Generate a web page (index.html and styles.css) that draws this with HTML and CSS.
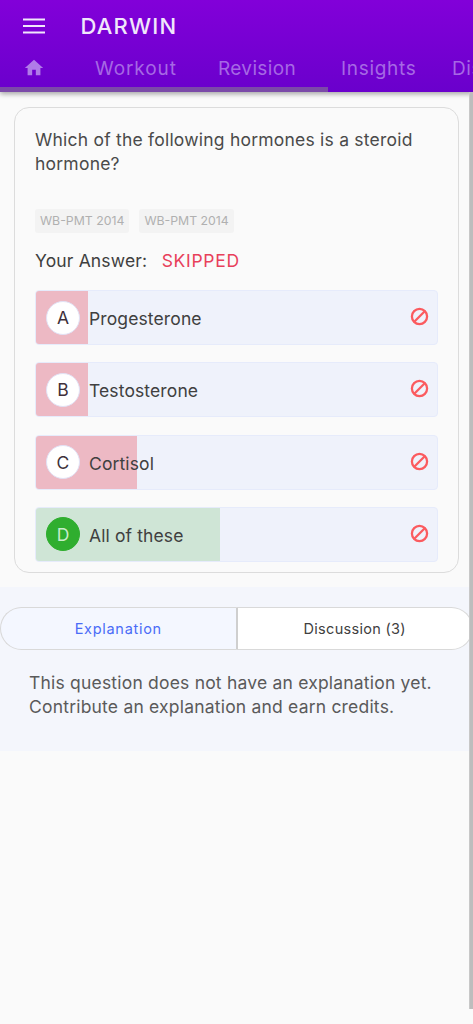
FILE: index.html
```html
<!DOCTYPE html>
<html lang="en">
<head>
<meta charset="utf-8">
<title>Darwin</title>
<link rel="stylesheet" href="styles.css">
</head>
<body>
<header class="appbar">
  <div class="toprow">
    <svg class="menu" viewBox="0 0 22 16" width="22" height="16"><path d="M0 1.5h22M0 8h22M0 14.5h22" stroke="#f1e6fb" stroke-width="2.2"/></svg>
    <span class="brand">DARWIN</span>
  </div>
  <nav class="tabs">
    <svg class="home" viewBox="0 0 24 24" width="22" height="22"><path d="M10 20v-6h4v6h5v-8h3L12 3 2 12h3v8z" fill="#b07be8"/></svg>
    <span class="tab t1">Workout</span>
    <span class="tab t2">Revision</span>
    <span class="tab t3">Insights</span>
    <span class="tab t4">Discussion</span>
  </nav>
  <div class="indicator"></div>
</header>
<div class="scrollbar"></div>
<main>
  <section class="card">
    <p class="question">Which of the following hormones is a steroid hormone?</p>
    <div class="chips"><span class="chip">WB-PMT 2014</span><span class="chip">WB-PMT 2014</span></div>
    <div class="answer"><span>Your Answer:</span><span class="skipped">SKIPPED</span></div>
    <div class="options">
      <div class="option"><div class="fill red" style="width:52px"></div><span class="letter">A</span><span class="label">Progesterone</span><svg class="ban" viewBox="0 0 20 20" width="19" height="19"><circle cx="10" cy="10" r="8" fill="none" stroke="#fb5b5f" stroke-width="2.4"/><path d="M4.5 15.5l11-11" stroke="#fb5b5f" stroke-width="2.4"/></svg></div>
      <div class="option"><div class="fill red" style="width:52px"></div><span class="letter">B</span><span class="label">Testosterone</span><svg class="ban" viewBox="0 0 20 20" width="19" height="19"><circle cx="10" cy="10" r="8" fill="none" stroke="#fb5b5f" stroke-width="2.4"/><path d="M4.5 15.5l11-11" stroke="#fb5b5f" stroke-width="2.4"/></svg></div>
      <div class="option"><div class="fill red" style="width:101px"></div><span class="letter">C</span><span class="label">Cortisol</span><svg class="ban" viewBox="0 0 20 20" width="19" height="19"><circle cx="10" cy="10" r="8" fill="none" stroke="#fb5b5f" stroke-width="2.4"/><path d="M4.5 15.5l11-11" stroke="#fb5b5f" stroke-width="2.4"/></svg></div>
      <div class="option"><div class="fill green" style="width:184px"></div><span class="letter correct">D</span><span class="label">All of these</span><svg class="ban" viewBox="0 0 20 20" width="19" height="19"><circle cx="10" cy="10" r="8" fill="none" stroke="#fb5b5f" stroke-width="2.4"/><path d="M4.5 15.5l11-11" stroke="#fb5b5f" stroke-width="2.4"/></svg></div>
    </div>
  </section>
  <section class="explain">
    <div class="segment">
      <div class="seg active">Explanation</div>
      <div class="seg other">Discussion (3)</div>
    </div>
    <p class="note">This question does not have an explanation yet. Contribute an explanation and earn credits.</p>
  </section>
</main>
</body>
</html>
```
FILE: styles.css
```css
* { box-sizing: border-box; }
html, body { margin: 0; height: 100%; overflow: hidden; }
body {
  background: #fafafa;
  font-family: Inter, "Liberation Sans", sans-serif;
  color: #404040;
  position: relative;
  height: 1024px;
}
.appbar {
  height: 92px;
  position: relative;
  background: linear-gradient(#8200d9, #6a00cc);
  box-shadow: 0 2px 5px rgba(0,0,0,.35);
  overflow: hidden;
}
.toprow { display: flex; align-items: center; height: 51px; padding-left: 23px; }
.menu { flex: none; }
.brand { margin-left: 35.5px; margin-top: 1px; color: #f1e6fb; font-size: 22px; font-weight: 500; letter-spacing: 1.2px; }
.tabs { display: flex; align-items: center; height: 36px; position: relative; white-space: nowrap; }
.home { position: absolute; left: 23px; top: 6px; }
.tab { position: absolute; top: 6px; color: #a668e4; font-size: 19px; letter-spacing: .6px; }
.t1 { left: 95px; letter-spacing: .9px; }
.t2 { left: 218px; letter-spacing: .35px; }
.t3 { left: 341px; letter-spacing: .7px; }
.t4 { left: 452px; }
.indicator { position: absolute; left: 0; bottom: 0; width: 328px; height: 5px; background: #7b4aa8; }
.scrollbar { position: absolute; right: 0; top: 92px; width: 4px; height: 917px; background: #bdbdbd; border-left: 1px solid #c8c8c8; }
main { display: block; padding-top: 15px; }
.card {
  margin: 0 14px 0 14px;
  width: 445px;
  height: 466px;
  border: 1.5px solid #dcdcdc;
  border-radius: 15px;
  padding: 20px 20px 0 20px;
}
.question { margin: 0; width: 395px; font-size: 17.5px; line-height: 24px; color: #4a4a4a; letter-spacing: .22px; }
.chips { display: flex; gap: 10px; margin-top: 33px; }
.chip { background: #f3f3f3; color: #b0b0b0; font-size: 12.3px; height: 24px; line-height: 24px; padding: 0 5px; border-radius: 3px; }
.answer { display: flex; gap: 14.5px; margin-top: 16px; font-size: 17.5px; height: 24px; line-height: 24px; color: #3f3f3f; letter-spacing: .15px; }
.skipped { color: #e8405a; letter-spacing: .7px; }
.options { display: flex; flex-direction: column; gap: 17.3px; margin-top: 17px; }
.option {
  position: relative;
  height: 55px;
  background: #eff2fb;
  border: 1px solid #e6ebfb;
  border-radius: 4px;
  display: flex;
  align-items: center;
  overflow: hidden;
}
.fill { position: absolute; left: 0; top: 0; bottom: 0; }
.red { background: #edb9c4; }
.green { background: #cfe5d6; }
.letter {
  position: relative;
  flex: none;
  width: 34px;
  height: 34px;
  margin-left: 10px;
  border-radius: 50%;
  background: #fff;
  border: 1px solid #e2e2f5;
  display: flex;
  align-items: center;
  justify-content: center;
  font-size: 17.5px;
  color: #40303a;
}
.letter.correct { background: #2fae2f; border-color: #2fae2f; color: #c9eccb; }
.label { position: relative; margin-left: 9px; padding-top: 2px; font-size: 17.5px; color: #404040; letter-spacing: .12px; }
.ban { position: absolute; right: 8px; top: 16px; }
.explain {
  margin-top: 14px;
  height: 164px;
  width: 469px;
  background: #f4f6fc;
  padding-top: 20px;
}
.segment { display: flex; height: 43px; width: 473px; }
.seg {
  flex: 1;
  display: flex;
  align-items: center;
  justify-content: center;
  border: 1.5px solid #d9d9d9;
  background: #fff;
  font-size: 14.5px;
  color: #404040;
}
.seg:first-child { border-radius: 22px 0 0 22px; border-right: 2px solid #cfcfcf; }
.seg:last-child { border-radius: 0 22px 22px 0; border-left: 0; }
.seg.active { background: #f4f7ff; color: #4a6cf7; letter-spacing: .7px; }
.seg.other { letter-spacing: .3px; }
.note { margin: 21px 0 0 29px; width: 425px; font-size: 17.5px; line-height: 24px; color: #5a5a5a; letter-spacing: .2px; }
```
